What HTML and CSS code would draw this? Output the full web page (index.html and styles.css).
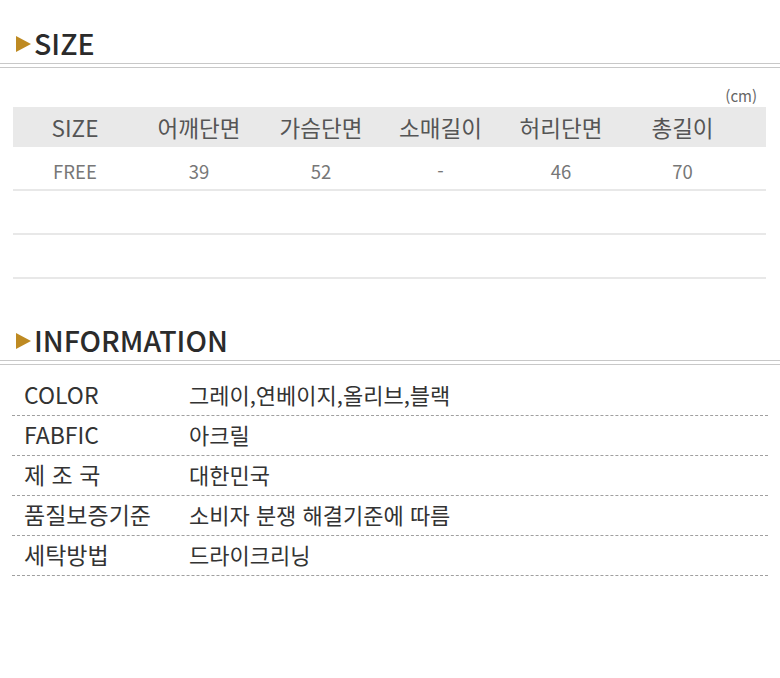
FILE: index.html
```html
<!DOCTYPE html>
<html lang="ko">
<head>
<meta charset="utf-8">
<link rel="stylesheet" href="styles.css">
</head>
<body>
<section class="sec">
  <h2 class="heading"><span class="tri"></span>SIZE</h2>
  <div class="rule"></div>
  <div class="unit">(cm)</div>
  <div class="size-table">
    <div class="srow shead">
      <div class="c">SIZE</div><div class="c">어깨단면</div><div class="c">가슴단면</div><div class="c">소매길이</div><div class="c">허리단면</div><div class="c">총길이</div>
    </div>
    <div class="srow sdata">
      <div class="c">FREE</div><div class="c">39</div><div class="c">52</div><div class="c">-</div><div class="c">46</div><div class="c">70</div>
    </div>
    <div class="srow sempty"></div>
    <div class="srow sempty"></div>
  </div>
</section>
<section class="sec info-sec">
  <h2 class="heading"><span class="tri"></span>INFORMATION</h2>
  <div class="rule"></div>
  <div class="info">
    <div class="irow"><div class="lbl">COLOR</div><div class="val">그레이,연베이지,올리브,블랙</div></div>
    <div class="irow"><div class="lbl">FABFIC</div><div class="val">아크릴</div></div>
    <div class="irow"><div class="lbl">제 조 국</div><div class="val">대한민국</div></div>
    <div class="irow"><div class="lbl">품질보증기준</div><div class="val">소비자 분쟁 해결기준에 따름</div></div>
    <div class="irow"><div class="lbl">세탁방법</div><div class="val">드라이크리닝</div></div>
  </div>
</section>
</body>
</html>
```
FILE: styles.css
```css
html, body {
  margin: 0;
  padding: 0;
  background: #fff;
}
body {
  font-family: "Noto Sans CJK KR", "Noto Sans", sans-serif;
  color: #333;
  width: 780px;
}
.sec {
  padding-top: 24px;
}
.info-sec {
  padding-top: 42px;
}
.heading {
  margin: 0;
  height: 39px;
  display: flex;
  align-items: center;
  padding-left: 16px;
  font-size: 28.5px;
  font-weight: 500;
  color: #2b2b2b;
  letter-spacing: 0;
  line-height: 1;
}
.tri {
  width: 0;
  height: 0;
  border-top: 8.5px solid transparent;
  border-bottom: 8.5px solid transparent;
  border-left: 15px solid #be8a22;
  margin-right: 3px;
}
.rule {
  height: 3px;
  border-top: 1px solid #c8c8c8;
  border-bottom: 1px solid #c8c8c8;
}
.unit {
  margin-top: 20px;
  margin-bottom: 3px;
  text-align: right;
  padding-right: 23px;
  font-size: 15px;
  line-height: 16px;
  color: #666;
}
.size-table {
  margin: 0 14px 0 13px;
}
.srow {
  display: grid;
  grid-template-columns: 124px 124px 120px 119px 122px 121px 1fr;
  align-items: center;
}
.shead {
  height: 40px;
  padding-bottom: 1px;
  box-sizing: border-box;
  background: #e9e9e9;
  font-size: 22.5px;
  color: #555;
}
.sdata {
  height: 44px;
  padding-top: 5px;
  box-sizing: border-box;
  font-size: 18.5px;
  color: #777;
  border-bottom: 2px solid #e8e8e8;
}
.sempty {
  height: 42px;
  border-bottom: 2px solid #e8e8e8;
}
.c {
  text-align: center;
}
.info {
  margin: 11px 12px 0 12px;
}
.irow {
  height: 40px;
  padding-bottom: 3px;
  box-sizing: border-box;
  display: flex;
  align-items: center;
  border-bottom: 1px dashed #a0a0a0;
  color: #333;
}
.lbl {
  width: 165px;
  padding-left: 12px;
  font-size: 23px;
}
.val {
  flex: 1;
  font-size: 22px;
}
```
